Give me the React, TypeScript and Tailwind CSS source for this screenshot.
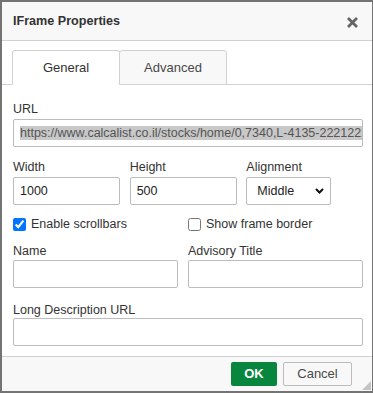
import React from "react";

function Field({ label, className = "", children }: { label: string; className?: string; children?: React.ReactNode }) {
  return (
    <div className={"flex flex-col " + className}>
      <div className="h-[16px] leading-[16px] text-[12.5px] text-[#333]">{label}</div>
      {children}
    </div>
  );
}

function TextBox({ value = "", className = "" }: { value?: string; className?: string }) {
  return (
    <div
      className={
        "h-[28px] border border-[#bcbcbc] rounded-[2px] bg-white flex items-center pl-[6px] text-[12.5px] text-[#222] overflow-hidden whitespace-nowrap " +
        className
      }
    >
      {value}
    </div>
  );
}

export default function App() {
  return (
    <div className="w-[373px] h-[393px] bg-[#747474] pt-[2px] pl-[2px] pb-[2px] pr-[1px] font-['Liberation_Sans',Arial,sans-serif]">
      <div className="w-full h-full bg-white flex flex-col">
        {/* Title bar */}
        <div className="h-[39px] shrink-0 bg-[#f8f8f8] border-b border-[#d1d1d1] flex items-center justify-between pl-[11px] pr-[14px]">
          <span className="text-[12.6px] font-bold text-[#333]">IFrame Properties</span>
          <svg width="11" height="11" viewBox="0 0 11 11" className="mt-[2px]">
            <path d="M1 1 L10 10 M10 1 L1 10" stroke="#656565" strokeWidth="2.8" strokeLinecap="butt" />
          </svg>
        </div>

        {/* Tabs */}
        <div className="pt-[9px] pl-[10px] flex shrink-0 relative z-10 -mb-px">
          <div className="w-[108px] h-[35px] border border-[#d1d1d1] border-b-white rounded-t-[3px] bg-white flex items-center justify-center text-[13px] text-[#333]">
            General
          </div>
          <div className="w-[108px] h-[35px] -ml-px border border-[#d1d1d1] rounded-t-[3px] bg-[#f8f8f8] flex items-center justify-center text-[13px] text-[#484848]">
            Advanced
          </div>
        </div>

        {/* Content */}
        <div className="flex-1 border-t border-[#d1d1d1] pl-[11px] pr-[9px] flex flex-col">
          <Field label="URL" className="mt-[16px]">
            <div className="mt-[2px] h-[28px] border border-[#bcbcbc] rounded-[2px] bg-white flex items-center pl-[6px] overflow-hidden whitespace-nowrap text-[12.5px]">
              <span className="bg-[#c8c8c8] text-[#555] leading-[14px]">
                https://www.calcalist.co.il/stocks/home/0,7340,L-4135-22212222,00.html
              </span>
            </div>
          </Field>

          <div className="grid grid-cols-3 mt-[12px]">
            <Field label="Width">
              <TextBox value="1000" className="mt-[2px] w-[107px]" />
            </Field>
            <Field label="Height">
              <TextBox value="500" className="mt-[2px] w-[107px]" />
            </Field>
            <Field label="Alignment">
              <div className="mt-[2px] w-[85px] h-[28px] border border-[#bcbcbc] rounded-[2px] bg-white flex items-center justify-between pl-[10px] pr-[6px] text-[12.5px] text-[#222]">
                <span>Middle</span>
                <svg width="9" height="6" viewBox="0 0 9 6">
                  <path d="M1 1 L4.5 4.5 L8 1" fill="none" stroke="#111" strokeWidth="2" />
                </svg>
              </div>
            </Field>
          </div>

          <div className="grid grid-cols-2 mt-[10px] h-[16px] items-center">
            <label className="flex items-center gap-[5px] text-[12.5px] text-[#333]">
              <input type="checkbox" defaultChecked className="m-0 w-[13px] h-[13px] accent-[#0075ff]" />
              Enable scrollbars
            </label>
            <label className="flex items-center gap-[5px] text-[12.5px] text-[#333]">
              <input type="checkbox" className="m-0 w-[13px] h-[13px]" />
              Show frame border
            </label>
          </div>

          <div className="grid grid-cols-2 mt-[12px]">
            <Field label="Name">
              <TextBox className="mt-[1px] w-[165px]" />
            </Field>
            <Field label="Advisory Title">
              <TextBox className="mt-[1px] w-full" />
            </Field>
          </div>

          <Field label="Long Description URL" className="mt-[14px]">
            <TextBox className="w-full" />
          </Field>
        </div>

        {/* Footer */}
        <div className="h-[35px] shrink-0 border-t border-[#d1d1d1] bg-[#f8f8f8] flex justify-end items-start pt-[5px] pr-[20px] gap-[6px] relative">
          <div className="w-[46px] h-[24px] bg-[#09863e] rounded-[2px] flex items-center justify-center text-white font-bold text-[13px]">
            OK
          </div>
          <div className="w-[69px] h-[24px] bg-[#f8f8f8] border border-[#bcbcbc] rounded-[2px] flex items-center justify-center text-[#484848] text-[13px]">
            Cancel
          </div>
          <svg width="10" height="10" viewBox="0 0 10 10" className="absolute right-[1px] bottom-[1px]">
            <path d="M10 1 L1 10 H10 Z" fill="#c4c4c4" />
          </svg>
        </div>
      </div>
    </div>
  );
}
